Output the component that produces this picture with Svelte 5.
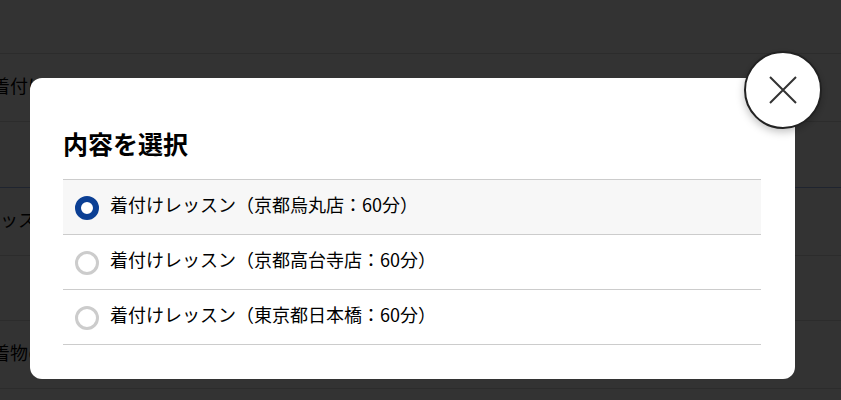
<script>
  const options = [
    '着付けレッスン（京都烏丸店：60分）',
    '着付けレッスン（京都高台寺店：60分）',
    '着付けレッスン（東京都日本橋：60分）',
  ];
  let selected = $state(0);
</script>

<div class="page">
  <div class="row r1"></div>
  <div class="row r2"><span>着付けレッスン</span></div>
  <div class="row r3"></div>
  <div class="row r4"><span class="shift">レッスン</span></div>
  <div class="row r5"></div>
  <div class="row r6"><span>着物の</span></div>
  <div class="row r7"></div>
</div>

<div class="overlay">
  <div class="modal">
    <button class="close" aria-label="閉じる">
      <svg width="30" height="30" viewBox="0 0 30 30">
        <path d="M2 2 L28 28 M28 2 L2 28" stroke="#333" stroke-width="2" fill="none" />
      </svg>
    </button>
    <h2>内容を選択</h2>
    <ul>
      {#each options as opt, i}
        <li class:active={selected === i}>
          <label>
            <input type="radio" name="course" checked={selected === i} onchange={() => (selected = i)} />
            <span class="dot"></span>
            <span class="txt">{opt}</span>
          </label>
        </li>
      {/each}
    </ul>
  </div>
</div>

<style>
  :global(body) {
    margin: 0;
    font-family: "Noto Sans CJK JP", "Noto Sans", sans-serif;
    background: #fff;
    overflow: hidden;
  }

  .page {
    height: 400px;
    overflow: hidden;
    color: #000;
    font-size: 18px;
  }
  .row {
    box-sizing: border-box;
    border-bottom: 1px solid #ddd;
    display: flex;
    align-items: center;
    white-space: nowrap;
  }
  .row span { margin-left: -8px; margin-top: -5px; }
  .row span.shift { margin-left: -18px; }
  .r1 { height: 54px; }
  .r2 { height: 68px; }
  .r3 { height: 66px; border-bottom-color: #9db6e8; }
  .r4 { height: 68px; }
  .r5 { height: 65px; }
  .r6 { height: 68px; }
  .r7 { height: 11px; border: 0; }

  .overlay {
    position: fixed;
    inset: 0;
    background: rgba(0, 0, 0, 0.8);
  }

  .modal {
    position: absolute;
    left: 30px;
    top: 78px;
    width: 765px;
    height: 301px;
    box-sizing: border-box;
    padding: 47px 34px 0 33px;
    background: #fff;
    border-radius: 12px;
  }

  .close {
    position: absolute;
    right: -27px;
    top: -27px;
    width: 78px;
    height: 78px;
    padding: 0;
    box-sizing: border-box;
    display: flex;
    align-items: center;
    justify-content: center;
    background: #fff;
    border: 2px solid #222;
    border-radius: 50%;
    box-shadow: 0 3px 8px rgba(0, 0, 0, 0.25);
    cursor: pointer;
  }

  h2 {
    margin: 0 0 18px;
    font-size: 25px;
    line-height: 36px;
    font-weight: 700;
    color: #000;
  }

  ul {
    margin: 0;
    padding: 0;
    list-style: none;
    border-top: 1px solid #ccc;
  }
  li {
    height: 55px;
    box-sizing: border-box;
    border-bottom: 1px solid #ccc;
  }
  li.active { background: #f7f7f7; }

  label {
    height: 100%;
    display: flex;
    align-items: center;
    padding-left: 12px;
    gap: 11px;
    cursor: pointer;
  }
  input {
    position: absolute;
    opacity: 0;
    width: 0;
    height: 0;
  }
  .dot {
    width: 24px;
    height: 24px;
    box-sizing: border-box;
    border: 3px solid #ccc;
    border-radius: 50%;
    background: #fff;
    margin-top: 1px;
  }
  li.active .dot {
    border: 6px solid #0b3f94;
  }
  .txt {
    font-size: 18px;
    line-height: 24px;
    color: #000;
    margin-top: -6px;
  }
</style>
